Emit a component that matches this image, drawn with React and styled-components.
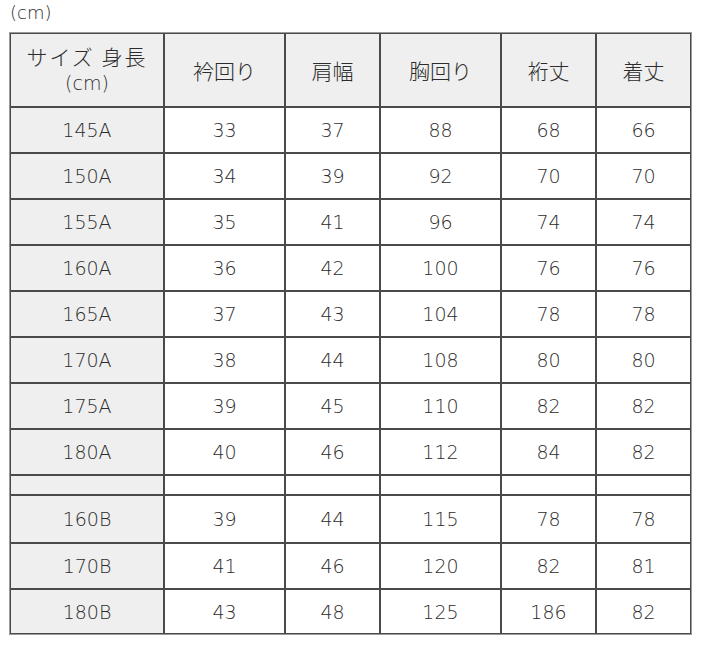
import React from "react";
import styled, { createGlobalStyle } from "styled-components";

const Global = createGlobalStyle`
  html, body { margin: 0; padding: 0; background: #fff; }
  body { font-family: "DejaVu Sans", "Noto Sans CJK JP", sans-serif; color: #2c2c2c; }
`;

const Page = styled.div`
  padding: 2px 0 0 10px;
  width: 720px;
  box-sizing: border-box;
`;

const Unit = styled.div`
  font-size: 18px;
  font-weight: 200;
  line-height: 22px;
  height: 30px;
  color: #2c2c2c;
`;

const Table = styled.table`
  border-collapse: separate;
  border-spacing: 0;
  border: 1px solid #9a9a9a;
  table-layout: fixed;
  width: 682px;
  margin-left: -1px;
`;

const Cell = styled.td`
  border: 1px solid #4a4a4a;
  padding: 0;
  text-align: center;
  vertical-align: middle;
  font-size: 19px;
  font-weight: 200;
  line-height: 24px;
  color: #2c2c2c;
  background: ${(p) => (p.$shade ? "#efefef" : "#fff")};
  height: ${(p) => p.$h}px;
  box-sizing: border-box;
`;

const HeadCell = styled(Cell).attrs({ as: "th" })`
  font-family: "Noto Sans CJK JP", "DejaVu Sans", sans-serif;
  font-weight: 300;
  font-size: 21px;
  line-height: 25px;
  letter-spacing: ${(p) => p.$ls || 0}px;
  background: #efefef;
`;

const Sub = styled.span`
  font-family: "DejaVu Sans", sans-serif;
  font-weight: 200;
  font-size: 19px;
  letter-spacing: 0;
`;

const widths = [154, 121, 95, 121, 95, 95];
const heads = ["衿回り", "肩幅", "胸回り", "裄丈", "着丈"];

const rowsA = [
  ["145A", 33, 37, 88, 68, 66],
  ["150A", 34, 39, 92, 70, 70],
  ["155A", 35, 41, 96, 74, 74],
  ["160A", 36, 42, 100, 76, 76],
  ["165A", 37, 43, 104, 78, 78],
  ["170A", 38, 44, 108, 80, 80],
  ["175A", 39, 45, 110, 82, 82],
  ["180A", 40, 46, 112, 84, 82],
];
const rowsB = [
  ["160B", 39, 44, 115, 78, 78, 48],
  ["170B", 41, 46, 120, 82, 81, 46],
  ["180B", 43, 48, 125, 186, 82, 45],
];

function DataRow({ r, h }) {
  return (
    <tr>
      {r.slice(0, 6).map((v, i) => (
        <Cell key={i} $shade={i === 0} $h={h}>
          {v}
        </Cell>
      ))}
    </tr>
  );
}

export default function App() {
  return (
    <Page>
      <Global />
      <Unit>(cm)</Unit>
      <Table>
        <colgroup>
          {widths.map((w, i) => (
            <col key={i} style={{ width: w }} />
          ))}
        </colgroup>
        <thead>
          <tr>
            <HeadCell $h={74} $ls={2}>
              サイズ 身長
              <br />
              <Sub>(cm)</Sub>
            </HeadCell>
            {heads.map((h) => (
              <HeadCell key={h} $h={74}>
                {h}
              </HeadCell>
            ))}
          </tr>
        </thead>
        <tbody>
          {rowsA.map((r) => (
            <DataRow key={r[0]} r={r} h={46} />
          ))}
          <tr>
            {widths.map((_, i) => (
              <Cell key={i} $shade={i === 0} $h={20} />
            ))}
          </tr>
          {rowsB.map((r) => (
            <DataRow key={r[0]} r={r} h={r[6]} />
          ))}
        </tbody>
      </Table>
    </Page>
  );
}
